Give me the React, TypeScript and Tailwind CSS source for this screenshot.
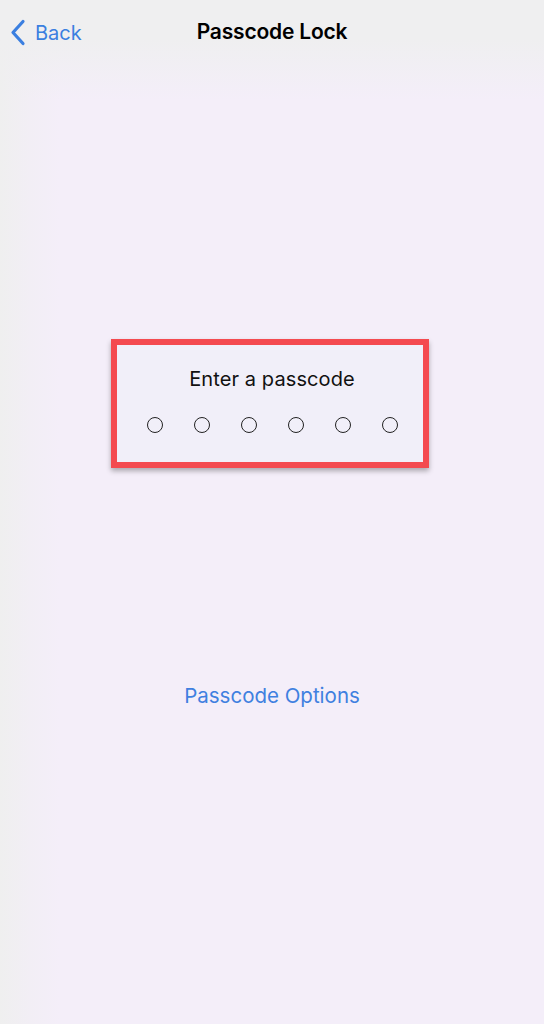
export default function App() {
  const dots = [0, 1, 2, 3, 4, 5];

  return (
    <div
      className="flex h-[1024px] w-[544px] flex-col bg-[linear-gradient(to_bottom,#efeff0_0px,#efeff0_40px,transparent_100px),linear-gradient(to_right,#efefef_0px,#f2eef5_30px,#f4eef9_60px)] text-black"
      style={{ fontFamily: "Inter, 'Liberation Sans', sans-serif" }}
    >
      {/* nav bar */}
      <div className="relative flex h-[64px] items-center justify-center">
        <button className="absolute left-[10px] top-[19px] flex items-center gap-[9px] text-[#3b7fe0]">
          <svg width="16" height="27" viewBox="0 0 16 27" fill="none">
            <path d="M13 2.5 L3 13.5 L13 24.5" stroke="currentColor" strokeWidth="3.2" strokeLinecap="round" strokeLinejoin="round" />
          </svg>
          <span className="text-[20px] leading-none">Back</span>
        </button>
        <h1 className="text-[21px] font-semibold tracking-[-0.2px]">Passcode Lock</h1>
      </div>

      {/* passcode entry */}
      <div className="mt-[275px] flex justify-center pr-[5px]">
        <div className="flex h-[129px] w-[318px] flex-col items-center border-[6px] border-[#f44a50] bg-[#f1eff9] pl-[5px] pt-[21px] shadow-[0_3px_5px_rgba(0,0,0,0.3)]">
          <p className="text-[20px] leading-[26px] tracking-[0.1px] text-[#111]">Enter a passcode</p>
          <div className="mt-[25px] ml-[1px] flex gap-[31px]">
            {dots.map((d) => (
              <span key={d} className="h-[16px] w-[16px] rounded-full border-[1.3px] border-[#222]" />
            ))}
          </div>
        </div>
      </div>

      <div className="mt-[218px] flex justify-center">
        <button className="text-[20.5px] leading-none text-[#3f80e0]">Passcode Options</button>
      </div>
    </div>
  );
}
